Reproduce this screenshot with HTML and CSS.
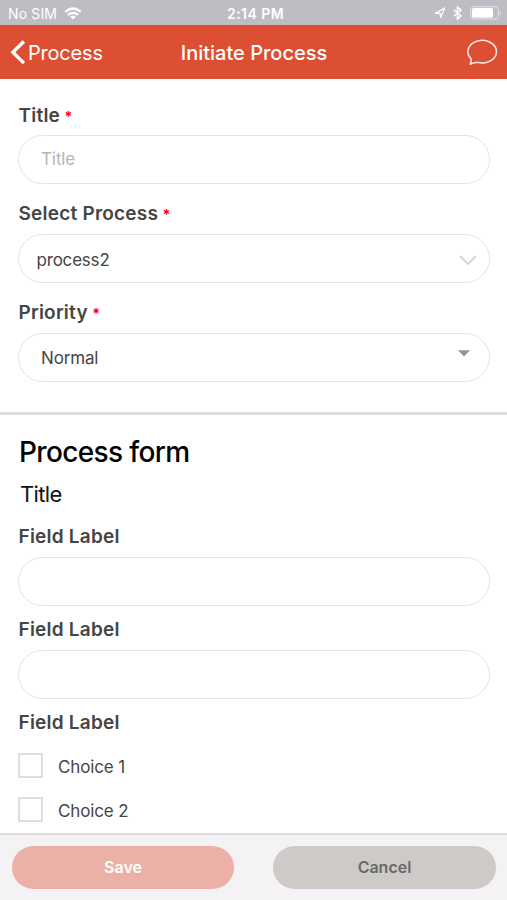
FILE: index.html
```html
<!DOCTYPE html>
<html lang="en">
<head>
<meta charset="utf-8">
<title>Initiate Process</title>
<link rel="stylesheet" href="styles.css">
</head>
<body>
<div class="screen">
  <div class="status">
    <div class="status-left"><span class="carrier">No SIM</span>
      <svg class="wifi" width="18" height="13" viewBox="0 0 18 13"><g fill="none" stroke="#fff" stroke-width="2.3"><path d="M1.2 5Q9-2 16.8 5"/><path d="M3.9 8Q9 3.4 14.1 8"/></g><path fill="#fff" d="M6.1 9.7Q9 7.4 11.9 9.7L9 12.6z"/></svg>
    </div>
    <span class="time">2:14 PM</span>
    <div class="status-right">
      <svg width="12" height="12" viewBox="0 0 12 12"><path d="M1 6.4 10.6 1.2 6.5 11 6.1 6.3z" fill="none" stroke="#fff" stroke-width="1.2"/></svg>
      <svg class="bluetooth" width="9" height="14" viewBox="0 0 9 14"><path d="M.8 3.7 8 9.9 4.5 13V1L8 4.1.8 10.3" fill="none" stroke="#fff" stroke-width="1.5"/></svg>
      <svg class="battery" width="32" height="14" viewBox="0 0 32 14"><rect x=".7" y=".7" width="27.6" height="12.4" rx="3" fill="none" stroke="#e2e1e5" stroke-width="1"/><rect x="2" y="2" width="21" height="9.8" rx="1.5" fill="#fff"/><path d="M29.8 4.6Q32 7 29.8 9.4z" fill="#e2e1e5"/></svg>
    </div>
  </div>
  <header class="nav">
    <a class="back"><svg width="16" height="25" viewBox="0 0 16 25"><path d="M13.9 1.5 2.9 12.3 13.9 23.1" fill="none" stroke="#fff" stroke-width="3.4"/></svg><span>Process</span></a>
    <h1>Initiate Process</h1>
    <svg class="chat" width="32" height="27" viewBox="0 0 32 27"><path d="M3.2 25.2C4.1 23.5 4.3 21.8 3.9 19.6A14.3 11.3 0 1 1 10.4 23.3C8.2 23.6 5.8 24 3.2 25.2z" fill="none" stroke="#ffe9e4" stroke-width="1.5" stroke-linejoin="round"/></svg>
  </header>
  <main>
    <section class="details">
      <div class="field"><label class="label">Title <b>*</b></label><div class="control"><span class="placeholder">Title</span></div></div>
      <div class="field"><label class="label">Select Process <b>*</b></label><div class="control picker"><span>process2</span><svg class="chevron" width="18" height="11" viewBox="0 0 18 11"><path d="M1.2 1.2 9 8.9 16.8 1.2" fill="none" stroke="#d4d4d4" stroke-width="2"/></svg></div></div>
      <div class="field"><label class="label">Priority <b>*</b></label><div class="control menu"><span>Normal</span><svg class="caret" width="12" height="7" viewBox="0 0 12 7"><path d="M0 .3H12L6 6.5z" fill="#929292"/></svg></div></div>
    </section>
    <section class="form">
      <h2>Process form</h2>
      <h3>Title</h3>
      <div class="field"><label class="label">Field Label</label><div class="control"></div></div>
      <div class="field"><label class="label">Field Label</label><div class="control"></div></div>
      <div class="field"><label class="label">Field Label</label></div>
      <div class="choice"><span class="box"></span><span>Choice 1</span></div>
      <div class="choice"><span class="box"></span><span>Choice 2</span></div>
    </section>
  </main>
  <footer><button class="save">Save</button><button class="cancel">Cancel</button></footer>
</div>
</body>
</html>
```
FILE: styles.css
```css
* { box-sizing: border-box; }
body { margin: 0; font-family: Inter, "Liberation Sans", sans-serif; background: #fff; color: #454545; }
h1, h2, h3 { margin: 0; font-weight: 400; }
svg { display: block; flex: none; }
.screen { width: 507px; height: 900px; display: flex; flex-direction: column; overflow: hidden; white-space: nowrap; }
.status { height: 25px; background: #bebdc3; color: #fff; display: grid; grid-template-columns: 1fr auto 1fr; align-items: center; padding: 3px 6px 0 8px; font-size: 14px; line-height: 20px; }
.status-left, .status-right { display: flex; align-items: center; }
.status-left { gap: 7px; }
.wifi { margin-bottom: 2px; }
.carrier { letter-spacing: .15px; }
.status-right { justify-content: flex-end; gap: 6px; padding-bottom: 2px; margin-right: -1px; }
.battery { margin-left: 2px; }
.bluetooth { margin-left: 1px; }
.time { font-weight: 600; letter-spacing: .45px; padding-left: 2px; }
.nav { height: 54px; background: #dc4f32; color: #fff; display: grid; grid-template-columns: 1fr auto 1fr; align-items: center; padding: 1px 9px 0 10px; font-size: 20px; }
.back { display: flex; align-items: center; gap: 2px; letter-spacing: -.2px; }
.back svg { margin-bottom: 1px; }
.nav h1 { font-size: 20px; font-weight: 500; }
.chat { justify-self: end; margin: 0 -1px 1px 0; }
main { flex: 1; min-height: 0; overflow: hidden; }
.details { height: 336px; padding: 7px 17px 0 18px; border-bottom: 3px solid #dedede; }
.label { display: block; height: 44px; line-height: 47px; font-size: 19px; font-weight: 600; letter-spacing: .22px; padding-left: .5px; }
.label b { color: #f00; font-size: 14px; font-weight: 700; line-height: 1; margin-left: -.5px; }
.details .label { height: 50px; line-height: 59px; }
.details .field:first-child .label { height: 49px; }
.control { height: 49px; border: 1.5px solid #e3e3e3; border-radius: 25px; display: flex; align-items: center; font-size: 17px; }
.placeholder { margin-left: 22px; color: #b5b5b5; padding-bottom: 2px; letter-spacing: -.1px; }
.picker { justify-content: space-between; padding: 3px 12px 0 17.5px; letter-spacing: -.2px; }
.menu { justify-content: space-between; padding: 0 19px 0 22px; letter-spacing: -.15px; }
.caret { margin-bottom: 8px; }
.form { padding: 18px 17px 0 18px; }
.form h2 { font-size: 28px; line-height: 38px; height: 36px; font-weight: 500; color: #000; padding-left: 1px; letter-spacing: -.65px; }
.form h3 { font-size: 22px; line-height: 30px; color: #111; margin-top: 10px; padding-left: 2px; letter-spacing: -.65px; }
.form h3 + .field { margin-top: 4px; }
.choice { height: 44px; display: flex; align-items: center; gap: 15px; font-size: 17px; letter-spacing: -.15px; padding-top: 3px; }
.box { width: 25px; height: 25px; border: 2px solid #dedede; margin-bottom: 2px; }
footer { height: 67px; border-top: 2px solid #dcdbdd; background: #f4f2f5; display: flex; justify-content: space-between; padding: 11px 11px 0 12px; }
button { border: 0; height: 43px; border-radius: 22px; font: 600 16px Inter, sans-serif; padding: 0 0 2px; }
.save { width: 222px; background: #ebb1a7; color: #fff; }
.cancel { width: 223px; background: #cecac8; color: #6b6866; }
```
